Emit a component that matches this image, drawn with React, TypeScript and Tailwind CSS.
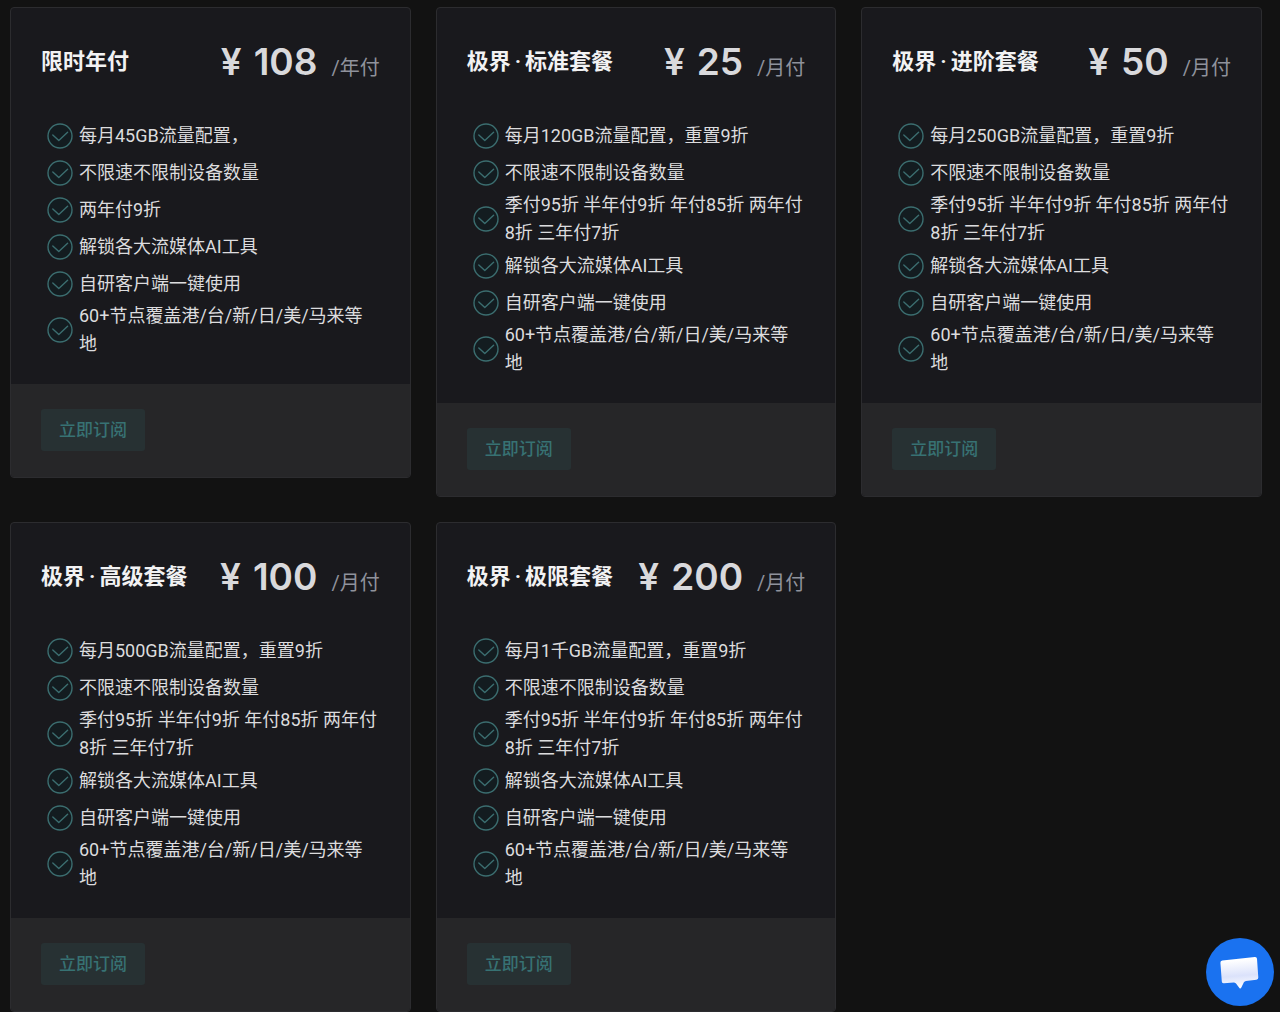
type Plan = {
  id: string;
  name: string[];
  price: number;
  period: string;
  features: string[];
};

const common = [
  "解锁各大流媒体AI工具",
  "自研客户端一键使用",
  "60+节点覆盖港/台/新/日/美/马来等\n地",
];

const discount = "季付95折 半年付9折 年付85折 两年付\n8折 三年付7折";
const unlimited = "不限速不限制设备数量";

const plans: Plan[] = [
  {
    id: "yearly",
    name: ["限时年付"],
    price: 108,
    period: "年付",
    features: ["每月45GB流量配置，", unlimited, "两年付9折", ...common],
  },
  {
    id: "standard",
    name: ["极界", "标准套餐"],
    price: 25,
    period: "月付",
    features: ["每月120GB流量配置，重置9折", unlimited, discount, ...common],
  },
  {
    id: "plus",
    name: ["极界", "进阶套餐"],
    price: 50,
    period: "月付",
    features: ["每月250GB流量配置，重置9折", unlimited, discount, ...common],
  },
  {
    id: "premium",
    name: ["极界", "高级套餐"],
    price: 100,
    period: "月付",
    features: ["每月500GB流量配置，重置9折", unlimited, discount, ...common],
  },
  {
    id: "ultimate",
    name: ["极界", "极限套餐"],
    price: 200,
    period: "月付",
    features: ["每月1千GB流量配置，重置9折", unlimited, discount, ...common],
  },
];

function CheckIcon() {
  return (
    <svg
      viewBox="0 0 26 26"
      className="size-[26px] shrink-0"
      fill="none"
      stroke="#3b6d6f"
      strokeWidth="1.4"
      strokeLinecap="round"
      strokeLinejoin="round"
      aria-hidden="true"
    >
      <circle cx="13" cy="13" r="12" fill="#131c20" />
      <path d="M5.8 12 L11.8 17.6 L20.6 9.2" />
    </svg>
  );
}

function PlanCard({ plan }: { plan: Plan }) {
  const [brand, tier] = plan.name;

  return (
    <article className="overflow-hidden rounded-[4px] border border-[#2c2c2f] bg-[#19191d]">
      <div className="px-[30px] pt-[30px] pb-[26px]">
        <header className="flex h-12 items-center justify-between whitespace-nowrap">
          <h2 className="text-[22px] leading-[32px] font-semibold text-[#f2f2f3]">
            {brand}
            {tier && <span className="mx-1">·</span>}
            {tier}
          </h2>
          <p className="flex items-baseline gap-3.5">
            <span className="flex gap-3 font-['Inter',sans-serif] text-[37px] leading-[48px] font-semibold text-[#d9d9dc]">
              <span>¥</span>
              <span>{plan.price}</span>
            </span>
            <span className="text-[20px] text-[#8f929c]">/{plan.period}</span>
          </p>
        </header>
        <ul className="-mr-2.5 mt-[31px] pl-1.5">
          {plan.features.map((feature) => (
            <li key={feature} className="flex min-h-[37px] items-center gap-1.5">
              <CheckIcon />
              <span className="text-[18px] leading-[28px] whitespace-pre-line text-[#dcdcde]">
                {feature}
              </span>
            </li>
          ))}
        </ul>
      </div>
      <footer className="bg-[#262628] px-[30px] pt-[25px] pb-[26px]">
        <button
          type="button"
          className="h-[42px] rounded-[3px] bg-[#273133] px-[18px] pt-0.5 text-[17px] font-medium text-[#377273]"
        >
          立即订阅
        </button>
      </footer>
    </article>
  );
}

export default function App() {
  return (
    <main
      lang="zh-CN"
      className="min-h-screen bg-[#121212] pt-[7px] pr-[18px] pl-2.5 font-['Roboto','Noto_Sans_CJK_SC',sans-serif]"
    >
      <div className="grid grid-cols-3 items-start gap-[25px]">
        {plans.map((plan) => (
          <PlanCard key={plan.id} plan={plan} />
        ))}
      </div>

      <button
        type="button"
        aria-label="在线客服"
        className="fixed right-1.5 bottom-1.5 size-[68px] rounded-full bg-[#1a72f0]"
      >
        <svg viewBox="0 0 68 68" className="size-full" aria-hidden="true">
          <defs>
            <linearGradient id="bubble" x1="0.4" y1="0" x2="0.5" y2="1">
              <stop offset="0.1" stopColor="#fff" />
              <stop offset="0.6" stopColor="#dbe2fb" />
              <stop offset="1" stopColor="#fff" />
            </linearGradient>
          </defs>
          <path
            d="M16.3 22.6 L48.8 19 Q50.8 18.8 51 20.8 L52.3 39.6 Q52.4 41.6 50.4 41.8 L40 42.9 Q38.6 43 37.9 44.3 L35.2 49.8 Q34.4 51.2 33.4 49.9 L30 45.6 Q29 44.4 27.6 44.5 L18 45.3 Q16 45.4 15.8 43.4 L14.4 24.8 Q14.3 22.8 16.3 22.6 Z"
            fill="url(#bubble)"
          />
        </svg>
      </button>
    </main>
  );
}
